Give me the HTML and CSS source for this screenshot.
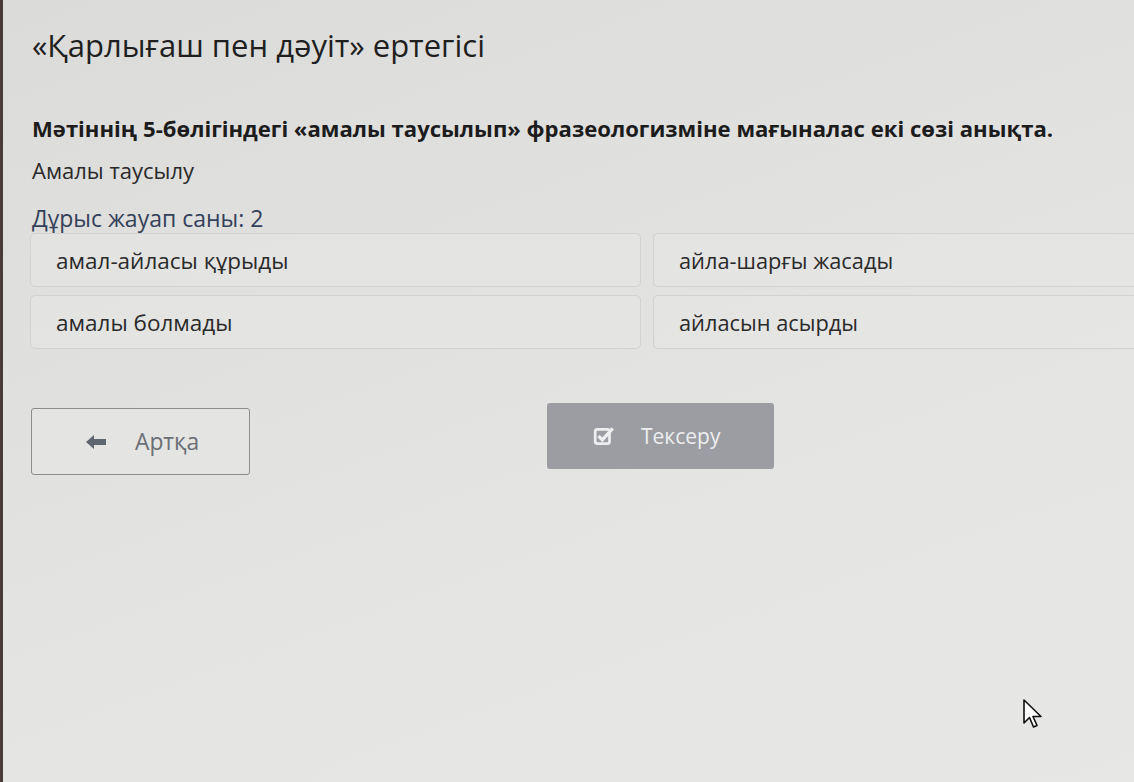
FILE: index.html
```html
<!DOCTYPE html>
<html lang="kk">
<head>
  <meta charset="UTF-8">
  <title>«Қарлығаш пен дәуіт» ертегісі</title>
  <link rel="stylesheet" href="styles.css">
</head>
<body>
  <div class="page">
    <h1 class="title">«Қарлығаш пен дәуіт» ертегісі</h1>

    <p class="question">Мәтіннің 5-бөлігіндегі «амалы таусылып» фразеологизміне мағыналас екі сөзі анықта.</p>
    <p class="phrase">Амалы таусылу</p>

    <p class="count">Дұрыс жауап саны: 2</p>
    <div class="options">
      <div class="option">амал-айласы құрыды</div>
      <div class="option right">айла-шарғы жасады</div>
      <div class="option">амалы болмады</div>
      <div class="option right">айласын асырды</div>
    </div>

    <div class="actions">
      <button class="btn back">
        <svg width="22" height="16" viewBox="0 0 22 16"><path d="M1 8 L9 1 L9 5 L21 5 L21 11 L9 11 L9 15 Z" fill="#5e6670"/></svg>
        <span>Артқа</span>
      </button>
      <button class="btn check">
        <svg width="22" height="20" viewBox="0 0 20 18"><rect x="2" y="3" width="13" height="13" rx="2" fill="none" stroke="#eeeef0" stroke-width="2.5"/><path d="M5 9 L8.5 12.5 L18 2" fill="none" stroke="#eeeef0" stroke-width="3"/></svg>
        <span>Тексеру</span>
      </button>
    </div>
  </div>

  <svg class="cursor" width="22" height="32" viewBox="0 0 22 32"><path d="M1 1 L1 24 L6.5 18.5 L10.5 28 L14 26.5 L10 17.5 L18 17.5 Z" fill="#fff" stroke="#111" stroke-width="1.6" stroke-linejoin="round"/></svg>
</body>
</html>
```

FILE: styles.css
```css
body {
  margin: 0;
  padding: 0;
  background: linear-gradient(160deg, #dbdbd9, #e4e4e2 60%, #e7e7e5);
  font-family: "Open Sans", "Noto Sans", sans-serif;
  color: #2b2b2b;
  height: 782px;
  overflow: hidden;
  border-left: 3px solid #4a3a3a;
  box-sizing: border-box;
}

.page {
  padding: 25px 0 0 29px;
}

.title {
  font-size: 31px;
  line-height: 40px;
  font-weight: 400;
  margin: 0;
  color: #1f1f1f;
}

.question {
  font-size: 22.1px;
  line-height: 30px;
  font-weight: 700;
  margin: 48px 0 0;
  color: #1c1c1c;
}

.phrase {
  font-size: 22px;
  line-height: 30px;
  margin: 12px 0 0;
  color: #2a2a2a;
}

.count {
  font-size: 23px;
  line-height: 30px;
  margin: 18px 0 0;
  color: #34415a;
}

.options {
  display: grid;
  grid-template-columns: 611px 1fr;
  gap: 8px 12px;
  margin: 0 0 0 -2px;
}

.option {
  border: 1px solid #d2d2d0;
  border-radius: 5px;
  height: 54px;
  box-sizing: border-box;
  display: flex;
  align-items: center;
  padding-left: 25px;
  font-size: 22.5px;
  color: #2a2a2a;
  background: rgba(230, 230, 228, 0.6);
}

.option.right {
  border-right: none;
  border-radius: 5px 0 0 5px;
  align-items: flex-start;
  padding-top: 12px;
  font-size: 21.8px;
  line-height: 30px;
}

.actions {
  display: flex;
  gap: 297px;
  margin-top: 54px;
  align-items: flex-start;
}

.btn {
  font-family: inherit;
  display: flex;
  align-items: center;
  border-radius: 3px;
  cursor: pointer;
}

.btn.back {
  width: 219px;
  height: 67px;
  margin-left: -1px;
  margin-top: 5px;
  background: #e4e4e2;
  border: 1px solid #8d8d8d;
  color: #6b6f75;
  font-size: 22.8px;
  padding-left: 53px;
  gap: 28px;
}

.btn.check {
  width: 227px;
  height: 66px;
  background: #9b9da2;
  border: none;
  color: #eeeef0;
  font-size: 21px;
  padding-left: 46px;
  gap: 26px;
}

.cursor {
  position: absolute;
  left: 1023px;
  top: 699px;
}
```
